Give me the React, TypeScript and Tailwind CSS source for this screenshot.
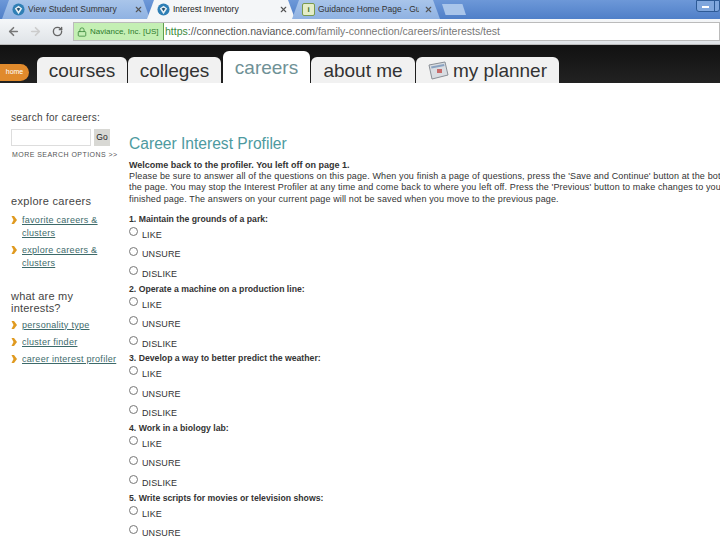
import { ArrowLeft, ArrowRight, Lock, RotateCw, X } from "lucide-react";

const Favicon = () => (
  <svg width="13" height="13" viewBox="0 0 14 14" className="shrink-0">
    <circle cx="7" cy="7" r="6.5" fill="#2f7fb5" />
    <path d="M3 6 L7 3 L11 6 L7 12 Z" fill="#e8f0f4" />
    <path d="M5 6 L7 5 L9 6 L7 9 Z" fill="#27506e" />
  </svg>
);

const Tab = ({ title, active, icon }: { title: string; active?: boolean; icon: React.ReactNode }) => (
  <div
    className={`flex h-[19px] w-[148px] -mr-[3px] shrink-0 items-center pl-[10px] pr-[7px] [clip-path:polygon(0_100%,7px_0,calc(100%-7px)_0,100%_100%)] ${
      active ? "bg-[#f4f6f8] text-[#222]" : "bg-gradient-to-b from-[#a9c5ea] to-[#8fb2e2] text-[#333]"
    }`}
  >
    {icon}
    <span className="ml-[3px] mr-[5px] min-w-0 flex-1 overflow-hidden whitespace-nowrap text-[8.5px]">{title}</span>
    <X size={9} strokeWidth={3} className="shrink-0 text-[#555]" />
  </div>
);

const NavTab = ({ label, className }: { label: string; className: string }) => (
  <div className={`flex h-[26px] items-center justify-center rounded-t-[6px] bg-[#f1f1f1] text-[19px] leading-none text-[#333] ${className}`}>
    {label}
  </div>
);

const SideLink = ({ children }: { children: React.ReactNode }) => (
  <li className="flex gap-[5px]">
    <svg width="6" height="8" viewBox="0 0 6 8" className="mt-[2px] shrink-0">
      <path d="M0.5 0 L3 0 L6 4 L3 8 L0.5 8 L2.5 4 Z" fill="#e09a20" />
    </svg>
    <a className="text-[9px] leading-[13px] tracking-[0.28px] text-[#3d6a6a] underline">{children}</a>
  </li>
);

const Option = ({ label }: { label: string }) => (
  <label className="flex h-[19.5px] items-center gap-[4px] text-[9px] tracking-[0.1px] text-[#333]">
    <span className="-mt-[8px] size-[9px] rounded-full border border-[#777] bg-white" />
    {label}
  </label>
);

const questions = [
  "1. Maintain the grounds of a park:",
  "2. Operate a machine on a production line:",
  "3. Develop a way to better predict the weather:",
  "4. Work in a biology lab:",
  "5. Write scripts for movies or television shows:",
];

export default function App() {
  return (
    <div className="flex h-[540px] w-[720px] flex-col overflow-hidden bg-white font-['Liberation_Sans',Arial,sans-serif]">
      {/* browser tabs */}
      <div className="flex h-[19px] shrink-0 items-end bg-gradient-to-b from-[#6d98d8] to-[#4f7fc8] pl-[2px]">
        <Tab title="View Student Summary" icon={<Favicon />} />
        <Tab title="Interest Inventory" active icon={<Favicon />} />
        <Tab
          title="Guidance Home Page - Guide"
          icon={
            <span className="flex size-[13px] shrink-0 items-center justify-center rounded-[2px] border border-[#7a9a50] bg-[#e4edc8] text-[8px] font-bold text-[#3d6a2a]">
              i
            </span>
          }
        />
        <div className="mb-[4px] ml-[5px] h-[11px] w-[24px] [clip-path:polygon(0_0,85%_0,100%_100%,15%_100%)] bg-[#a9c5ea]" />
        <div className="mb-[7px] ml-auto flex h-[12px] w-[24px] shrink-0 rounded-b-[3px] border border-[#2d5a96] bg-[#7fa6dd]">
          <span className="flex h-full w-[18px] items-center justify-center border-r border-[#2d5a96]">
            <span className="mt-[2px] h-[2px] w-[7px] bg-white" />
          </span>
        </div>
      </div>

      {/* toolbar */}
      <div className="flex h-[26px] shrink-0 items-center border-b border-[#bbb] bg-gradient-to-b from-[#f5f7f9] to-[#dfe3e7] pl-[7px]">
        <ArrowLeft size={13} strokeWidth={3} className="text-[#777]" />
        <ArrowRight size={13} strokeWidth={3} className="ml-[9px] text-[#ccc]" />
        <RotateCw size={11} strokeWidth={3} className="ml-[10px] text-[#666]" />
        <div className="ml-[10px] flex h-[19px] flex-1 items-center border border-[#bbb] bg-white text-[10.5px] text-[#777]">
          <span className="flex h-[17px] w-[90px] shrink-0 items-center gap-[3px] border-r border-[#5f9e4f] bg-[#c4efb4] pl-[3px] text-[8px] text-[#2d7a2d]">
            <Lock size={10} className="text-[#3d8a3d]" />
            Naviance, Inc. [US]
          </span>
          <span className="ml-[1px] text-[#3d8a3d]">https</span>
          <span className="text-[#555]">://connection.naviance.com</span>
          <span>/family-connection/careers/interests/test</span>
        </div>
      </div>

      {/* site nav */}
      <div className="flex h-[38px] shrink-0 items-end bg-gradient-to-b from-[#111] to-[#222]">
        <div className="mb-[2px] flex h-[17px] w-[29px] shrink-0 items-center justify-center rounded-r-full bg-[#e08a2c] text-[7px] text-white">
          home
        </div>
        <NavTab label="courses" className="ml-[8px] w-[90px]" />
        <NavTab label="colleges" className="ml-[1px] w-[93px]" />
        <div className="ml-[2px] flex h-[32px] w-[87px] justify-center rounded-t-[6px] bg-white pt-[6px] text-[19px] leading-[22px] text-[#6f9196]">
          careers
        </div>
        <NavTab label="about me" className="ml-[1px] w-[104px]" />
        <div className="ml-[1px] flex h-[26px] w-[143px] items-center justify-center gap-[4px] rounded-t-[6px] bg-[#f1f1f1] text-[19px] leading-none text-[#333]">
          <svg width="21" height="19" viewBox="0 0 21 19">
            <path d="M1 4 L17 1 L20 14 L4 18 Z" fill="#d9dde2" stroke="#8a8f96" />
            <path d="M3 5.5 L16 3 L16.5 5 L3.5 7.5 Z" fill="#8aa2c0" />
            <rect x="9" y="8" width="5" height="4" fill="#c96a6a" />
          </svg>
          my planner
        </div>
      </div>

      {/* page */}
      <div className="flex min-h-0 flex-1">
        <aside className="w-[129px] shrink-0 pl-[11px] pt-[29px]">
          <h3 className="text-[10px] leading-[12px] tracking-[0.3px] text-[#444]">search for careers:</h3>
          <div className="mt-[5px] flex gap-[3px]">
            <input className="h-[17px] w-[80px] border border-[#ddd] bg-white" />
            <div className="flex h-[17px] w-[16px] items-center justify-center bg-[#d8d8d4] text-[8.5px] text-[#222]">Go</div>
          </div>
          <div className="mt-[4px] ml-[1px] whitespace-nowrap text-[7px] tracking-[0.45px] text-[#555]">MORE SEARCH OPTIONS &gt;&gt;</div>

          <h3 className="mt-[34px] text-[11px] leading-[13px] tracking-[0.3px] text-[#444]">explore careers</h3>
          <ul className="mt-[6px] flex flex-col gap-[4px]">
            <SideLink>
              favorite careers &amp;
              <br />
              clusters
            </SideLink>
            <SideLink>
              explore careers &amp;
              <br />
              clusters
            </SideLink>
          </ul>

          <h3 className="mt-[20px] w-[90px] text-[11px] leading-[12px] tracking-[0.2px] text-[#444]">what are my interests?</h3>
          <ul className="mt-[5px] flex flex-col gap-[4px] whitespace-nowrap">
            <SideLink>personality type</SideLink>
            <SideLink>cluster finder</SideLink>
            <SideLink>career interest profiler</SideLink>
          </ul>
        </aside>

        <main className="min-w-0 flex-1 pt-[52px] whitespace-nowrap text-[9px] text-[#333]">
          <h1 className="text-[15.6px] leading-[18px] text-[#4d9aa0]">Career Interest Profiler</h1>
          <p className="mt-[7px] text-[9px] leading-[11.2px] tracking-[0.13px]">
            <b className="tracking-normal">Welcome back to the profiler. You left off on page 1.</b>
            <br />
            Please be sure to answer all of the questions on this page. When you finish a page of questions, press the 'Save and Continue' button at the bottom of
            <br />
            the page. You may stop the Interest Profiler at any time and come back to where you left off. Press the 'Previous' button to make changes to your last
            <br />
            finished page. The answers on your current page will not be saved when you move to the previous page.
          </p>
          <div className="mt-[9px] flex flex-col">
            {questions.map((q) => (
              <section key={q} className="h-[69.7px]">
                <h2 className="h-[12px] text-[8.7px] leading-[11px] font-bold">{q}</h2>
                <Option label="LIKE" />
                <Option label="UNSURE" />
                <Option label="DISLIKE" />
              </section>
            ))}
          </div>
        </main>
      </div>
    </div>
  );
}
